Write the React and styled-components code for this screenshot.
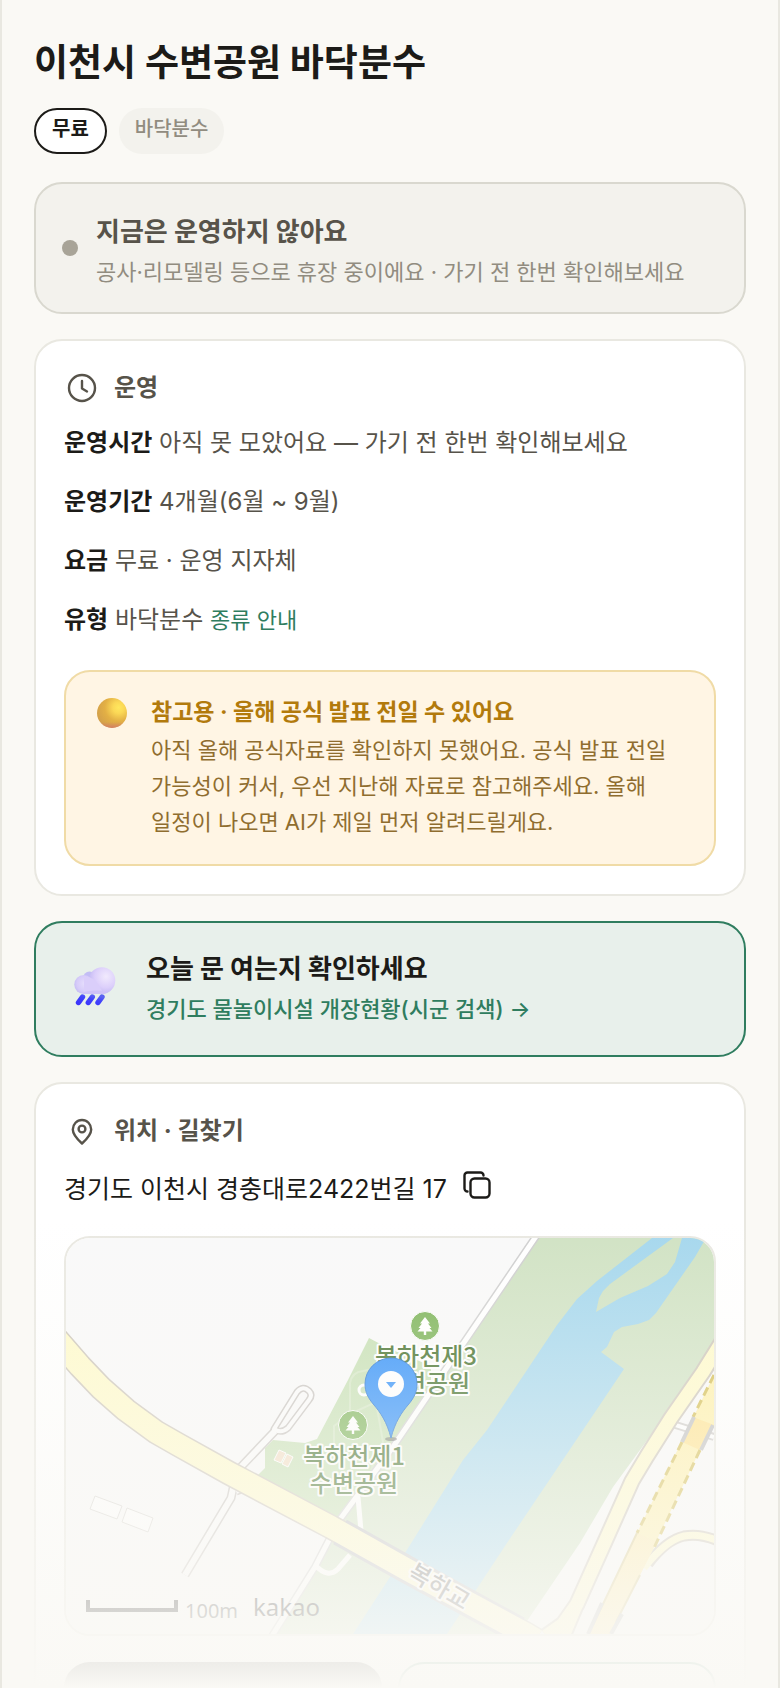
import React from 'react'
import styled, { createGlobalStyle } from 'styled-components'

function App() {
  return (
    <>
      <GlobalStyle />
      <Page>
        <Title>이천시 수변공원 바닥분수</Title>
        <Tags>
          <Tag $outlined>무료</Tag>
          <Tag>바닥분수</Tag>
        </Tags>
        <Sections>
          <StatusCard>
            <Dot />
            <StatusBody>
              <StatusTitle>지금은 운영하지 않아요</StatusTitle>
              <StatusText>공사·리모델링 등으로 휴장 중이에요 · 가기 전 한번 확인해보세요</StatusText>
            </StatusBody>
          </StatusCard>

          <Card>
            <CardHeading>
              <ClockIcon />
              운영
            </CardHeading>
            <Rows>
              <Row><b>운영시간</b> 아직 못 모았어요 — 가기 전 한번 확인해보세요</Row>
              <Row><b>운영기간</b> 4개월(6월 ~ 9월)</Row>
              <Row><b>요금</b> 무료 · 운영 지자체</Row>
              <Row><b>유형</b> 바닥분수 <a href="#types">종류 안내</a></Row>
            </Rows>
            <Notice>
              <YellowBall />
              <div>
                <NoticeTitle>참고용 · 올해 공식 발표 전일 수 있어요</NoticeTitle>
                <NoticeText>
                  아직 올해 공식자료를 확인하지 못했어요. 공식 발표 전일 가능성이 커서, 우선 지난해 자료로 참고해주세요. 올해 일정이 나오면 AI가 제일 먼저 알려드릴게요.
                </NoticeText>
              </div>
            </Notice>
          </Card>

          <LinkCard href="#open-status">
            <RainCloud />
            <div>
              <LinkTitle>오늘 문 여는지 확인하세요</LinkTitle>
              <LinkText>경기도 물놀이시설 개장현황(시군 검색) →</LinkText>
            </div>
          </LinkCard>

          <Card>
            <CardHeading>
              <PinIcon />
              위치 · 길찾기
            </CardHeading>
            <Address>
              경기도 이천시 경충대로2422번길 17
              <CopyButton type="button" aria-label="주소 복사">
                <CopyIcon />
              </CopyButton>
            </Address>
            <MapBox>
              <ParkMap />
            </MapBox>
            <Actions>
              <ActionButton type="button" $primary aria-label="길찾기" />
              <ActionButton type="button" aria-label="지도 보기" />
            </Actions>
          </Card>
        </Sections>
        <Fade />
      </Page>
    </>
  )
}

export default App

function ClockIcon() {
  return (
    <LineIcon viewBox="0 0 36 36">
      <circle cx="18" cy="18" r="13" />
      <path d="M18 11v7.5l5 3" />
    </LineIcon>
  )
}

function PinIcon() {
  return (
    <LineIcon viewBox="0 0 36 36">
      <path d="M18 30.500c-5-4.500-9.200-8.800-9.200-14a9.200 9.500 0 0 1 18.400 0c0 5.200-4.200 9.500-9.200 14z" />
      <circle cx="18" cy="16" r="3.400" />
    </LineIcon>
  )
}

function CopyIcon() {
  return (
    <svg width="28" height="28" viewBox="0 0 28 28" fill="none" stroke="#1c1b18" strokeWidth="2.400" strokeLinecap="round" strokeLinejoin="round">
      <rect x="7.500" y="7.500" width="19" height="19" rx="4" />
      <path d="M4.500 20.500a3 3 0 0 1-3-3V4.500a3 3 0 0 1 3-3h13a3 3 0 0 1 3 3" />
    </svg>
  )
}

function YellowBall() {
  return (
    <BallSvg viewBox="0 0 30 30">
      <defs>
        <radialGradient id="ball" cx="0.720" cy="0.320" r="0.760">
          <stop offset="0" stopColor="#ffe75e" />
          <stop offset="0.250" stopColor="#fbd856" />
          <stop offset="0.600" stopColor="#e3b045" />
          <stop offset="1" stopColor="#d3a04a" />
        </radialGradient>
        <linearGradient id="ballShade" x1="0" y1="0" x2="0" y2="1">
          <stop offset="0.800" stopColor="#d4766c" stopOpacity="0" />
          <stop offset="1" stopColor="#d4766c" stopOpacity="0.800" />
        </linearGradient>
      </defs>
      <circle cx="15" cy="15" r="15" fill="url(#ball)" />
      <circle cx="15" cy="15" r="15" fill="url(#ballShade)" />
    </BallSvg>
  )
}

function RainCloud() {
  return (
    <CloudSvg viewBox="0 0 44 44">
      <defs>
        <radialGradient id="puffBig" cx="0.650" cy="0.350" r="0.700">
          <stop offset="0" stopColor="#f1eafd" />
          <stop offset="0.600" stopColor="#dccffb" />
          <stop offset="1" stopColor="#c0b6f2" />
        </radialGradient>
        <radialGradient id="puffSmall" cx="0.550" cy="0.450" r="0.600">
          <stop offset="0" stopColor="#e6defc" />
          <stop offset="0.700" stopColor="#d6cbf9" />
          <stop offset="1" stopColor="#c3baf4" />
        </radialGradient>
        <linearGradient id="drop" x1="1" y1="0" x2="0" y2="1">
          <stop offset="0" stopColor="#5a62f0" />
          <stop offset="0.400" stopColor="#4244fb" />
          <stop offset="1" stopColor="#3b35fb" />
        </linearGradient>
      </defs>
      <circle cx="15.500" cy="11" r="6.500" fill="#c3bdf5" />
      <circle cx="28" cy="13.500" r="13.300" fill="url(#puffBig)" />
      <circle cx="9.800" cy="17.500" r="9.500" fill="url(#puffSmall)" />
      <path d="M10 9.500Q18 10 22 14L30 26.800H10z" fill="#dacefa" />
      <path d="M10 25c8-2 16-2 24-0.500-2 1.800-4 2.500-7 2.500H10z" fill="#cfc2f8" />
      <path d="M8.500 30l-4 5.500M18.300 30l-4 5.500M28 30l-4 5.500" stroke="url(#drop)" strokeWidth="5.400" strokeLinecap="round" />
    </CloudSvg>
  )
}

const TreeMark = ({ x, y }) => (
  <g transform={`translate(${x} ${y})`}>
    <circle r="14.500" fill="#79b254" stroke="#fff" strokeWidth="1" />
    <path d="M0-9l5 6.500H3L6.500 2H4.500L7.500 5.500H1.200V9H-1.200V5.500H-7.500L-4.500 2H-6.500L-3-2.500H-5z" fill="#fff" />
  </g>
)

function ParkMap() {
  return (
    <MapSvg viewBox="0 0 648 396" preserveAspectRatio="xMidYMid slice" role="img" aria-label="복하천 수변공원 지도">
      <rect width="648" height="396" fill="#f9f9f9" />

      {/* parks */}
      <path d="M470 0H648V105L601 175L547 249L514 305L461 383L448 396H206L249 329L262 302L272 282L327 209z" fill="#d0e2c3" />
      <path d="M303 100L320 109L365 128V152L272 284L191 238L199 230V210L207 202L239 205L251 201L282 142z" fill="#c5dfb2" />
      <path d="M284 174V145Q286 134 297 133L320 128M268 208V188L284 176L310 164L317 204L305 232" fill="none" stroke="#d3e6c3" strokeWidth="2" />

      {/* river */}
      <path d="M586 0L531 43L511 61L491 87L421 192L397 222L339 315L324 339L287 396H381L441 305L558 131L535 114L541 109L548 94L556 89L572 86L583 82L590 75L629 19L640 0z" fill="#a5d7ed" />
      <path d="M607 0L544 46L537 53L533 60L530 74L554 60L582 48L601 36L609 24L616 0z" fill="#d0e2c3" />

      {/* riverside road */}
      <path d="M473-6L327 209L272 284M264 300L249 329L206 398" fill="none" stroke="#cfcfcf" strokeWidth="8" />
      <path d="M473-6L327 209L272 284M292 259L295 293M264 300L249 329L206 398M249 327Q262 341 272 331L284 317" fill="none" stroke="#fff" strokeWidth="5" />
      <circle cx="298" cy="152" r="5" fill="none" stroke="#fff" strokeWidth="3" />

      {/* parking and side roads */}
      <g fill="none" strokeLinejoin="round">
        <path d="M208 191L231 154Q237 147 243 153Q247 157 243 162L222 190Q215 196 208 191z" stroke="#c6c2be" strokeWidth="7" />
        <path d="M172 232L209 193M168 246L165 260L119 337M170 253L178 250" stroke="#c6c2be" strokeWidth="9" />
        <path d="M208 191L231 154Q237 147 243 153Q247 157 243 162L222 190Q215 196 208 191z" stroke="#fbfbfb" strokeWidth="4" />
        <path d="M172 232L209 193M168 246L165 260L119 337M170 253L178 250" stroke="#fbfbfb" strokeWidth="6" />
        <path d="M600 184L648 199" stroke="#cdcac7" strokeWidth="8" />
        <path d="M600 184L648 199" stroke="#fff" strokeWidth="4" />
      </g>
      <g fill="#fefefe" stroke="#d6d4d0" strokeWidth="1">
        <path d="M29 258L56 268L51 281L24 271z" />
        <path d="M61 270L87 280L82 294L56 284z" />
      </g>
      <path d="M213 212L220 215L215 225L208 222zM221 216L227 219L222 229L216 226z" fill="#f2dcc2" stroke="#fff" />

      {/* curved road on the east side */}
      <g fill="none" strokeLinejoin="round">
        <path d="M660 97L637 134L605 180L581 218L566 243L537 308L511 366L497 386L480 398" stroke="#cbc4b8" strokeWidth="17" />
        <path d="M524 338L498 400" stroke="#cbc4b8" strokeWidth="14" />
        <path d="M660 97L637 134L605 180L581 218L566 243L537 308L511 366L497 386L480 398" stroke="#fffac8" strokeWidth="13" />
        <path d="M524 338L498 400" stroke="#fffac8" strokeWidth="10" />
        <path d="M582 326Q600 302 618 298Q634 295 652 303" stroke="#cbc4b8" strokeWidth="11" />
        <path d="M578 330Q600 302 618 298Q634 295 652 303" stroke="#fffac8" strokeWidth="7" />
      </g>

      {/* expressway */}
      <path d="M648 137L571 295L527 387L523 396H544L574 337L634 212L648 187z" fill="#fff0a6" />
      <path d="M627 179L648 187L634 212L616 204z" fill="#ffe28a" />
      <path d="M571 295L591 304L574 337L544 396H523z" fill="#ffeba6" />
      <path d="M648 137L627 179M616 204L571 295M634 212L588 310" stroke="#d2bb4c" strokeWidth="3" strokeDasharray="9 5" fill="none" />
      <path d="M571 295L527 387M574 337L550 384" stroke="#d8c888" strokeWidth="2" fill="none" />
      <path d="M628 179L616 204M647 187L635 212M536 365L522 396M556 376L545 396" stroke="#bdbdbd" strokeWidth="4" fill="none" />

      {/* main road and bridge */}
      <g fill="none" strokeLinejoin="round">
        <path d="M-12 98L14 128L35 150L60 172L90 194L111 206L163 235L265 289L340 331L460 396L470 402" stroke="#cbc4b8" strokeWidth="25" />
        <path d="M274 294L340 331L452 392" stroke="#bcbcc0" strokeWidth="28" />
        <path d="M-12 98L14 128L35 150L60 172L90 194L111 206L163 235L265 289L340 331L460 396L470 402" stroke="#fffac8" strokeWidth="22" />
      </g>

      <TreeMark x={359} y={88} />
      <TreeMark x={287} y={187} />
      <MapLabel x="360" y="127">복하천제3</MapLabel>
      <MapLabel x="360" y="154">수변공원</MapLabel>
      <MapLabel x="288" y="227">복하천제1</MapLabel>
      <MapLabel x="288" y="254">수변공원</MapLabel>
      <MapLabel $road x="373" y="357" transform="rotate(30 373 349)">복하교</MapLabel>

      {/* marker */}
      <ellipse cx="325" cy="201" rx="6" ry="2" fill="#555" opacity="0.600" />
      <path d="M325 200C321 184 314 174 308 167C302 160 299 154 299 146A26 26 0 0 1 351 146C351 154 348 160 342 167C336 174 329 184 325 200z" fill="#288cfa" stroke="#1b6fd2" strokeWidth="1" />
      <circle cx="325" cy="146" r="13" fill="#fff" />
      <path d="M320 144H330L325 150z" fill="#288cfa" />

      <path d="M22 362V372H110V362" fill="none" stroke="#1d1d1d" strokeWidth="4" />
      <ScaleText x="119" y="380">100m</ScaleText>
      <ScaleText $logo x="187" y="378">kakao</ScaleText>
    </MapSvg>
  )
}

const GlobalStyle = createGlobalStyle`
*{
    box-sizing:border-box;
}
body{
    margin:0;
    background:#faf9f5;
    color:#1c1b18;
    font-family:Inter,"Noto Sans CJK KR",sans-serif;
    word-break:keep-all;
}
h1,h2,p{
    margin:0;
}
a{
    text-decoration:none;
}
`
const Page = styled.main`
position:relative;
height:100vh;
overflow:hidden;
padding:32px 32px 0;
border:solid #e9e8e1;
border-width:0 2px;
`
const Title = styled.h1`
font-size:37px;
line-height:62px;
font-weight:700;
`
const Tags = styled.div`
display:flex;
gap:12px;
margin:14px 0 28px;
`
const Tag = styled.span`
height:46px;
padding:0 16px;
border:${props => props.$outlined ? '2px solid #1c1b18' : '0'};
border-radius:23px;
background:${props => props.$outlined ? '#fff' : '#f3f2ed'};
color:${props => props.$outlined ? '#1c1b18' : '#918c80'};
font-size:20px;
line-height:${props => props.$outlined ? '38px' : '42px'};
font-weight:${props => props.$outlined ? 700 : 500};
`
const Sections = styled.div`
display:flex;
flex-direction:column;
gap:25px;
`
const StatusCard = styled.section`
display:flex;
align-items:center;
gap:18px;
padding:20px 26px;
border:2px solid #d9d8cf;
border-radius:28px;
background:#f3f2ed;
`
const Dot = styled.span`
flex:none;
width:16px;
height:16px;
border-radius:50%;
background:#a8a498;
`
const StatusBody = styled.div`
padding-top:8px;
`
const StatusTitle = styled.h2`
font-size:26px;
line-height:40px;
font-weight:700;
color:#57534a;
`
const StatusText = styled.p`
font-size:22px;
line-height:40px;
color:#918c80;
`
const Card = styled.section`
padding:28px;
border:2px solid #e9e8e1;
border-radius:28px;
background:#fff;
`
const CardHeading = styled.h2`
display:flex;
align-items:center;
gap:14px;
font-size:24px;
line-height:38px;
font-weight:700;
color:#57534a;
`
const LineIcon = styled.svg`
flex:none;
width:36px;
height:36px;
fill:none;
stroke:#57534a;
stroke-width:2.4;
stroke-linecap:round;
stroke-linejoin:round;
`
const Rows = styled.div`
display:flex;
flex-direction:column;
gap:16px;
margin:14px 0 28px;
`
const Row = styled.p`
font-size:24px;
line-height:43px;
color:#57534a;

b{
    font-weight:700;
    color:#1c1b18;
}
a{
    font-size:22px;
    color:#2f7d5f;
}
`
const Notice = styled.div`
display:flex;
gap:24px;
padding:20px 31px 24px;
border:2px solid #f0dba6;
border-radius:26px;
background:#fff5e4;
`
const BallSvg = styled.svg`
flex:none;
width:30px;
height:30px;
margin-top:6px;
`
const NoticeTitle = styled.h2`
font-size:23px;
line-height:40px;
font-weight:700;
color:#b27a0c;
`
const NoticeText = styled.p`
font-size:22px;
line-height:36px;
color:#8f6d2f;
`
const LinkCard = styled.a`
display:flex;
align-items:center;
gap:28px;
padding:26px 38px;
border:2px solid #2f7d5f;
border-radius:28px;
background:#e8f0eb;
`
const CloudSvg = styled.svg`
flex:none;
width:44px;
height:44px;
`
const LinkTitle = styled.h2`
font-size:26px;
line-height:40px;
font-weight:700;
color:#1c1b18;
`
const LinkText = styled.p`
font-size:22px;
line-height:40px;
font-weight:500;
color:#2f7d5f;
`
const Address = styled.p`
display:flex;
align-items:center;
gap:16px;
margin:19px 0 27px;
font-size:25px;
line-height:40px;
`
const CopyButton = styled.button`
display:flex;
padding:0 0 9px;
border:0;
background:none;
cursor:pointer;
`
const MapBox = styled.div`
height:400px;
border:2px solid #e9e8e1;
border-radius:26px;
overflow:hidden;
`
const MapSvg = styled.svg`
display:block;
width:100%;
height:100%;
`
const MapLabel = styled.text`
font-family:"Noto Sans CJK KR",sans-serif;
font-size:24px;
font-weight:500;
text-anchor:middle;
fill:${props => props.$road ? '#6e6e6e' : '#3c6b23'};
stroke:#fff;
stroke-width:4px;
stroke-linejoin:round;
paint-order:stroke;
`
const ScaleText = styled.text`
font-family:"Noto Sans",sans-serif;
font-size:${props => props.$logo ? '24px' : '20px'};
font-weight:400;
fill:${props => props.$logo ? '#1d1d1d' : '#444'};
`
const Actions = styled.div`
display:grid;
grid-template-columns:1fr 1fr;
gap:16px;
margin-top:26px;
`
const ActionButton = styled.button`
height:96px;
border:2px solid ${props => props.$primary ? '#1c1b18' : '#2f7d5f'};
border-radius:26px;
background:${props => props.$primary ? '#1c1b18' : '#fff'};
`
const Fade = styled.div`
position:absolute;
left:-2px;
right:-2px;
bottom:0;
height:468px;
background:linear-gradient(rgba(250,249,245,0),#faf9f5);
pointer-events:none;
`
